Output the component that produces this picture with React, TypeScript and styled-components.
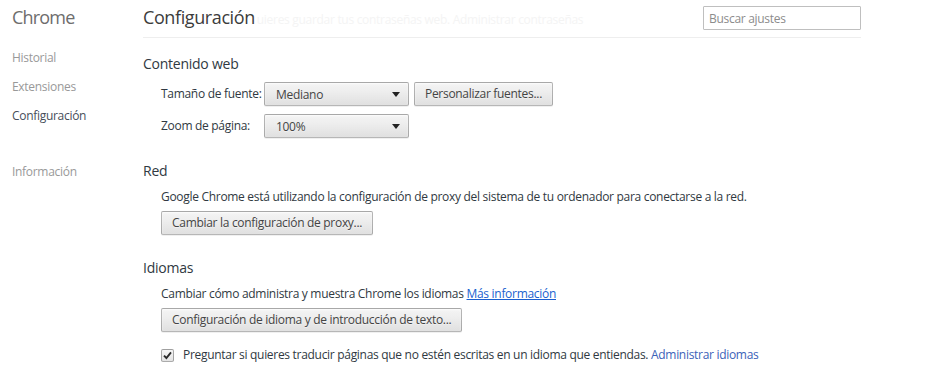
import styled, { createGlobalStyle } from "styled-components";

const FONT = `"Open Sans", "Noto Sans", "Liberation Sans", sans-serif`;

const GlobalStyle = createGlobalStyle`
  html, body {
    margin: 0;
    padding: 0;
    background: #fff;
  }
  body {
    font-family: ${FONT};
    font-size: 12px;
    letter-spacing: -0.3px;
    color: #303942;
  }
`;

const Page = styled.div`
  display: flex;
  width: 947px;
  height: 373px;
  overflow: hidden;
`;

const Sidebar = styled.nav`
  width: 131px;
  padding-left: 12px;
  display: flex;
  flex-direction: column;
`;

const Brand = styled.div`
  height: 38px;
  font-size: 18px;
  letter-spacing: -0.8px;
  line-height: 34px;
  color: #6d6d6d;
`;

const NavList = styled.ul`
  list-style: none;
  margin: 5px 0 0;
  padding: 0;
`;

const NavItem = styled.li<{ $active?: boolean; $gapBefore?: boolean }>`
  height: 29px;
  line-height: 29px;
  color: ${(p) => (p.$active ? "#464e5a" : "#999")};
  margin-top: ${(p) => (p.$gapBefore ? "27px" : "0")};
`;

const Main = styled.main`
  width: 718px;
  display: flex;
  flex-direction: column;
`;

const Header = styled.header`
  height: 37px;
  border-bottom: 1px solid #eee;
  display: flex;
  justify-content: space-between;
  align-items: flex-start;
`;

const TitleWrap = styled.div`
  display: flex;
  align-items: baseline;
  padding-top: 4px;
`;

const Title = styled.h1`
  margin: 0;
  font-size: 18px;
  font-weight: normal;
  letter-spacing: -0.4px;
  line-height: 26px;
  color: #3c3c3c;
`;

const Ghost = styled.span`
  margin-left: 2px;
  font-size: 12px;
  color: #f4f4f4;
  white-space: nowrap;
`;

const Search = styled.input`
  margin-top: 6px;
  width: 158px;
  height: 24px;
  box-sizing: border-box;
  border: 1px solid #bfbfbf;
  border-radius: 1px;
  padding: 0 5px;
  font-family: ${FONT};
  font-size: 12px;
  letter-spacing: -0.3px;
  color: #303942;
  &::placeholder {
    color: #8c8c8c;
  }
`;

const Sections = styled.div`
  display: flex;
  flex-direction: column;
  gap: 23px;
  margin-top: 16px;
`;

const Section = styled.section`
  display: flex;
  flex-direction: column;
`;

const SectionTitle = styled.h3`
  margin: 0 0 8px;
  font-size: 14px;
  font-weight: normal;
  letter-spacing: -0.25px;
  line-height: 20px;
  color: #303942;
`;

const Content = styled.div`
  padding-left: 18px;
  display: flex;
  flex-direction: column;
  align-items: flex-start;
  gap: 6px;
`;

const FormGrid = styled.div`
  display: grid;
  grid-template-columns: 98px 145px auto;
  column-gap: 5px;
  row-gap: 8px;
  align-items: center;
`;

const Label = styled.label`
  line-height: 24px;
  white-space: nowrap;
`;

const controlSurface = `
  box-sizing: border-box;
  height: 24px;
  border: 1px solid rgba(0, 0, 0, 0.25);
  border-radius: 2px;
  background-image: linear-gradient(#f4f4f4, #eeeeee 38%, #e0e0e0);
  box-shadow: 0 1px 0 rgba(0, 0, 0, 0.06), inset 0 1px 2px rgba(255, 255, 255, 0.75);
  color: #444;
  font-family: ${FONT};
  font-size: 12px;
  letter-spacing: -0.3px;
  text-shadow: 0 1px 0 #f0f0f0;
`;

const Select = styled.div`
  ${controlSurface}
  width: 145px;
  display: flex;
  align-items: center;
  justify-content: space-between;
  padding: 0 8px 0 11px;
`;

const Arrow = styled.span`
  width: 0;
  height: 0;
  border-left: 4px solid transparent;
  border-right: 4px solid transparent;
  border-top: 5px solid #222;
`;

const Button = styled.button`
  ${controlSurface}
  padding: 0 10px;
  line-height: 22px;
  white-space: nowrap;
  cursor: default;
`;

const Text = styled.p`
  margin: 0;
  line-height: 16px;
  white-space: nowrap;
`;

const Link = styled.a<{ $underline?: boolean }>`
  color: ${(p) => (p.$underline ? "#1a5fcf" : "#3b62b8")};
  text-decoration: ${(p) => (p.$underline ? "underline" : "none")};
`;

const CheckRow = styled.label`
  display: flex;
  align-items: center;
  gap: 9px;
  margin-top: 9px;
  line-height: 16px;
  white-space: nowrap;
`;

const CheckBox = styled.span`
  box-sizing: border-box;
  width: 13px;
  height: 13px;
  border: 1px solid rgba(0, 0, 0, 0.3);
  border-radius: 2px;
  background-image: linear-gradient(#f6f6f6, #e4e4e4);
  display: flex;
  align-items: center;
  justify-content: center;
`;

const Check = () => (
  <svg width="9" height="9" viewBox="0 0 9 9">
    <path d="M1 4.6 L3.4 7 L8 1.4" fill="none" stroke="#2b2b2b" strokeWidth="1.9" />
  </svg>
);

export default function App() {
  return (
    <>
      <GlobalStyle />
      <Page>
        <Sidebar>
          <Brand>Chrome</Brand>
          <NavList>
            <NavItem>Historial</NavItem>
            <NavItem>Extensiones</NavItem>
            <NavItem $active>Configuración</NavItem>
            <NavItem $gapBefore>Información</NavItem>
          </NavList>
        </Sidebar>
        <Main>
          <Header>
            <TitleWrap>
              <Title>Configuración</Title>
              <Ghost>uieres guardar tus contraseñas web. Administrar contraseñas</Ghost>
            </TitleWrap>
            <Search placeholder="Buscar ajustes" />
          </Header>
          <Sections>
            <Section>
              <SectionTitle>Contenido web</SectionTitle>
              <Content>
                <FormGrid>
                  <Label>Tamaño de fuente:</Label>
                  <Select>
                    <span>Mediano</span>
                    <Arrow />
                  </Select>
                  <Button>Personalizar fuentes...</Button>
                  <Label>Zoom de página:</Label>
                  <Select>
                    <span>100%</span>
                    <Arrow />
                  </Select>
                </FormGrid>
              </Content>
            </Section>
            <Section>
              <SectionTitle>Red</SectionTitle>
              <Content>
                <Text>
                  Google Chrome está utilizando la configuración de proxy del sistema de tu
                  ordenador para conectarse a la red.
                </Text>
                <Button>Cambiar la configuración de proxy...</Button>
              </Content>
            </Section>
            <Section>
              <SectionTitle>Idiomas</SectionTitle>
              <Content>
                <Text>
                  Cambiar cómo administra y muestra Chrome los idiomas{" "}
                  <Link $underline href="#">Más información</Link>
                </Text>
                <Button>Configuración de idioma y de introducción de texto...</Button>
                <CheckRow>
                  <CheckBox>
                    <Check />
                  </CheckBox>
                  <span>
                    Preguntar si quieres traducir páginas que no estén escritas en un idioma que
                    entiendas. <Link href="#">Administrar idiomas</Link>
                  </span>
                </CheckRow>
              </Content>
            </Section>
          </Sections>
        </Main>
      </Page>
    </>
  );
}
